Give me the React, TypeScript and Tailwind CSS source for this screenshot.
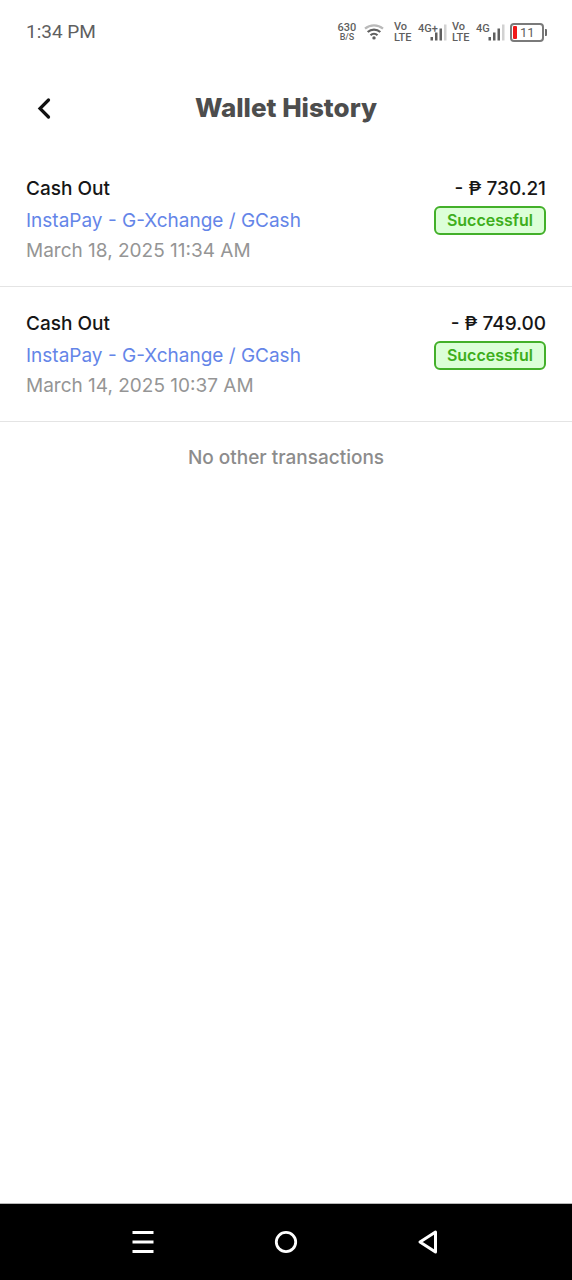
type Transaction = {
  id: string;
  title: string;
  channel: string;
  date: string;
  amount: string;
  status: string;
};

const transactions: Transaction[] = [
  {
    id: "1",
    title: "Cash Out",
    channel: "InstaPay - G-Xchange / GCash",
    date: "March 18, 2025 11:34 AM",
    amount: "- ₱ 730.21",
    status: "Successful",
  },
  {
    id: "2",
    title: "Cash Out",
    channel: "InstaPay - G-Xchange / GCash",
    date: "March 14, 2025 10:37 AM",
    amount: "- ₱ 749.00",
    status: "Successful",
  },
];

function WifiIcon() {
  return (
    <svg width="20" height="16" viewBox="0 0 20 16" fill="none" aria-hidden="true">
      <path d="M1 4.700C6 .3 14 .3 19 4.700" stroke="#b9b9b9" strokeWidth="2.200" />
      <path d="M3.700 8c3.600-3.200 9-3.200 12.600 0" stroke="#5f5f5f" strokeWidth="2.300" />
      <path d="M6.500 11.300c2-1.800 5-1.800 7 0" stroke="#5f5f5f" strokeWidth="2.200" />
      <circle cx="10" cy="13.900" r="1.700" fill="#5f5f5f" />
    </svg>
  );
}

function VoLte() {
  return (
    <div className="w-[17px] text-[11px] font-medium leading-[11px]">
      <div>Vo</div>
      <div>LTE</div>
    </div>
  );
}

function Signal({ label }: { label: string }) {
  return (
    <div className="grid h-[18px] w-[29px]">
      <span className="col-start-1 row-start-1 text-[11px] font-medium leading-[11px]">{label}</span>
      <svg
        className="col-start-1 row-start-1 self-end justify-self-end"
        width="17"
        height="17"
        viewBox="0 0 17 17"
        aria-hidden="true"
      >
        <rect x="0.500" y="13" width="2.500" height="3.500" fill="#5f5f5f" />
        <rect x="5" y="8.500" width="2.500" height="8" fill="#5f5f5f" />
        <rect x="9.500" y="4.500" width="2.500" height="12" fill="#5f5f5f" />
        <rect x="14" y="0.500" width="2.500" height="16" fill="#d2d2d2" />
      </svg>
    </div>
  );
}

function Battery() {
  return (
    <div className="flex items-center gap-px">
      <div className="flex h-[19px] w-[34px] items-center gap-[3px] rounded-[4px] border-2 border-[#7a7a7a] px-px">
        <span className="h-[13px] w-[4px] rounded-[1px] bg-[#f01818]" />
        <span className="text-[13px] leading-[15px]">11</span>
      </div>
      <span className="h-[7px] w-[2px] rounded-r-[1px] bg-[#6b6b6b]" />
    </div>
  );
}

function StatusBar() {
  return (
    <div className="flex h-16 items-center justify-between pl-[26px] pr-[25px] font-['Roboto',sans-serif] text-[#5f5f5f]">
      <span className="text-[19px] leading-6">1:34 PM</span>
      <div className="flex items-center">
        <div className="mr-[7px] w-5 text-center font-medium">
          <div className="text-[11px] leading-[10px]">630</div>
          <div className="text-[9px] leading-[9px]">B/S</div>
        </div>
        <div className="mr-[10px]">
          <WifiIcon />
        </div>
        <VoLte />
        <div className="ml-[7px] mr-[5px]">
          <Signal label="4G+" />
        </div>
        <VoLte />
        <div className="ml-[7px] mr-[5px]">
          <Signal label="4G" />
        </div>
        <Battery />
      </div>
    </div>
  );
}

function TransactionRow({ item }: { item: Transaction }) {
  return (
    <li className="flex justify-between border-b border-[#e4e4e4] px-[26px] py-[21px]">
      <div>
        <h2 className="text-[19px] font-medium leading-8 text-[#161616]">{item.title}</h2>
        <p className="text-[19px] leading-8 text-[#6485e8]">{item.channel}</p>
        <p className="text-[19px] leading-7 text-[#959595]">{item.date}</p>
      </div>
      <div className="flex flex-col items-end gap-px">
        <p className="text-[19px] font-medium leading-8 text-[#161616]">{item.amount}</p>
        <span className="flex h-[29px] items-center rounded-[6px] border-2 border-[#43b02a] bg-[#dcffd8] px-[11px] pb-0.5 text-[16px] font-semibold leading-5 text-[#3eae1c]">
          {item.status}
        </span>
      </div>
    </li>
  );
}

function NavigationBar() {
  return (
    <nav
      className="grid h-[77px] grid-cols-3 place-items-center border-t border-[#b8b8b8] bg-black px-[12.5%]"
      aria-label="System"
    >
      <button type="button" aria-label="Recent apps">
        <svg width="24" height="24" viewBox="0 0 24 24" aria-hidden="true">
          <path d="M1.500 2.500h21M1.500 12h21M1.500 21.500h21" stroke="#fff" strokeWidth="3" />
        </svg>
      </button>
      <button type="button" aria-label="Home">
        <svg width="24" height="24" viewBox="0 0 24 24" fill="none" aria-hidden="true">
          <circle cx="12" cy="12" r="9.700" stroke="#fff" strokeWidth="2.800" />
        </svg>
      </button>
      <button type="button" aria-label="Back">
        <svg width="24" height="24" viewBox="0 0 24 24" fill="none" aria-hidden="true">
          <path d="M18.500 2v20L3 12z" stroke="#fff" strokeWidth="3" strokeLinejoin="round" />
        </svg>
      </button>
    </nav>
  );
}

export default function App() {
  return (
    <div className="flex min-h-screen flex-col bg-white font-['Inter',sans-serif]">
      <StatusBar />
      <header className="grid h-[87px] grid-cols-[36px_1fr_36px] items-center px-[26px]">
        <button type="button" aria-label="Go back" className="flex h-9 items-center justify-center">
          <svg width="20" height="24" viewBox="0 0 20 24" fill="none" aria-hidden="true">
            <path d="M14.500 4L6 12.500l8.500 8.500" stroke="#111" strokeWidth="3.200" strokeLinecap="round" />
          </svg>
        </button>
        <h1 className="text-center text-[26px] font-extrabold leading-8 text-[#4d4d4d]">Wallet History</h1>
      </header>
      <main className="flex-1 pt-px">
        <ul>
          {transactions.map((item) => (
            <TransactionRow key={item.id} item={item} />
          ))}
        </ul>
        <p className="pt-5 text-center text-[19px] font-medium leading-8 text-[#8c8c8c]">No other transactions</p>
      </main>
      <NavigationBar />
    </div>
  );
}
